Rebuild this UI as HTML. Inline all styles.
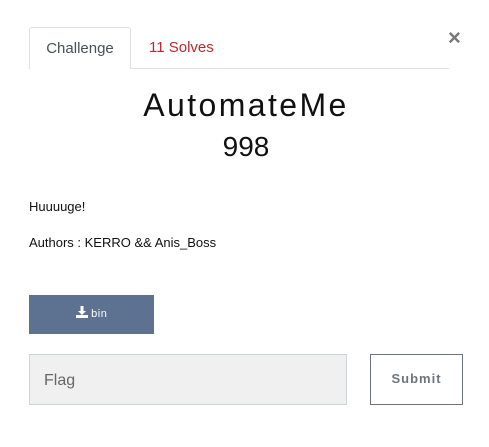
<!DOCTYPE html>
<html><head><style>
body{margin:0;width:489px;height:447px;background:#fff;font-family:"Liberation Sans",sans-serif;position:relative;overflow:hidden}
.a{position:absolute}
</style></head><body>
<div class="a" style="left:29px;top:68px;width:420px;height:1px;background:#dee2e6"></div>
<div class="a" style="left:29px;top:27px;width:102px;height:42px;border:1px solid #dee2e6;border-bottom:none;border-radius:3px 3px 0 0;background:#fff;box-sizing:border-box;color:#495057;font-size:15px;text-align:center;line-height:42px">Challenge</div>
<div class="a" style="left:149px;top:28px;line-height:40px;font-size:15px;color:#c6252b">11 Solves</div>
<div class="a" style="left:448px;top:25px;font-size:22px;font-weight:bold;color:#777">×</div>
<div class="a" style="left:0;width:492px;top:87px;text-align:center;font-size:32px;letter-spacing:2.4px;color:#111">AutomateMe</div>
<div class="a" style="left:0;width:492px;top:131px;text-align:center;font-size:28px;color:#111">998</div>
<div class="a" style="left:29px;top:199px;font-size:13px;color:#111">Huuuuge!</div>
<div class="a" style="left:29px;top:235px;font-size:13px;color:#111">Authors : KERRO &amp;&amp; Anis_Boss</div>
<div class="a" style="left:29px;top:295px;width:125px;height:39px;background:#5c7290;color:#fff;font-size:11px;text-align:center;line-height:39px;letter-spacing:.5px">
<svg width="12" height="12" viewBox="0 0 12 12" style="vertical-align:-1px"><path d="M4.5 0h3v5h2.5L6 9 2 5h2.5z" fill="#fff"/><rect x="0" y="9" width="12" height="3" fill="#fff"/></svg> bin</div>
<div class="a" style="left:29px;top:354px;width:318px;height:51px;background:#f0f0f0;border:1px solid #ced4da;box-sizing:border-box;color:#666;font-size:16px;line-height:51px;padding-left:14px">Flag</div>
<div class="a" style="left:370px;top:354px;width:93px;height:51px;border:1px solid #6c757d;box-sizing:border-box;color:#6c757d;font-size:13px;font-weight:bold;text-align:center;line-height:47px;letter-spacing:1px">Submit</div>
</body></html>
